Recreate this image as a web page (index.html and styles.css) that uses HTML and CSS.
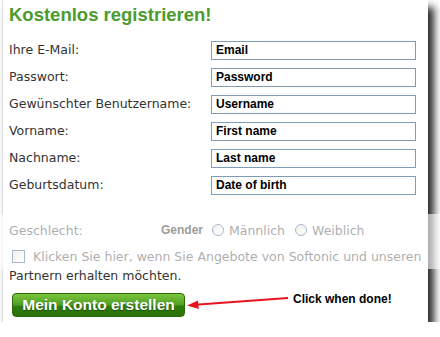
FILE: index.html
```html
<!DOCTYPE html>
<html lang="de">
<head>
    <meta charset="UTF-8">
    <title>Kostenlos registrieren</title>
    <link rel="stylesheet" href="styles.css">
</head>
<body>
    <div class="card">
        <h1>Kostenlos registrieren!</h1>

        <div class="fields">
            <label>Ihre E-Mail:</label>
            <div class="field">Email</div>
            <label>Passwort:</label>
            <div class="field">Password</div>
            <label>Gewünschter Benutzername:</label>
            <div class="field">Username</div>
            <label>Vorname:</label>
            <div class="field">First name</div>
            <label>Nachname:</label>
            <div class="field">Last name</div>
            <label>Geburtsdatum:</label>
            <div class="field">Date of birth</div>
        </div>

        <div class="gender">
            <span class="gender-label">Geschlecht:</span>
            <span class="gender-note">Gender</span>
            <span class="radio"></span><span class="option">Männlich</span>
            <span class="radio"></span><span class="option">Weiblich</span>
        </div>

        <p class="optin"><span class="check"></span>Klicken Sie hier, wenn Sie Angebote von Softonic und unseren Partnern erhalten möchten.</p>

        <div class="submit">
            <button class="btn">Mein Konto erstellen</button>
            <svg class="arrow" width="104" height="16" viewBox="0 0 104 16">
                <line x1="6" y1="11" x2="102" y2="4" stroke="#e8141e" stroke-width="2"/>
                <polygon points="1,11.5 12,6.5 12.8,15" fill="#e8141e"/>
            </svg>
            <span class="hint">Click when done!</span>
        </div>

        <!-- greyed-out band laid over the optional part of the form -->
        <div class="veil"></div>
    </div>
</body>
</html>
```

FILE: styles.css
```css
/* Basic Resets */
* {
    margin: 0;
    padding: 0;
    box-sizing: border-box;
}

body {
    font-family: 'DejaVu Sans', Verdana, sans-serif;
    font-size: 12.5px;
    color: #333;
    background: #fff;
}

.card {
    position: relative;
    width: 426px;
    height: 322px;
    margin-left: 2px;
    padding: 0 0 0 6px;
    background: #fff;
    border-left: 1px solid #e0e0e0;
    box-shadow: 6px 7px 8px rgba(0, 0, 0, 0.85);
}

.card h1 {
    font-family: 'Liberation Sans', Arial, sans-serif;
    font-size: 18.5px;
    font-weight: bold;
    line-height: 26px;
    padding-top: 2px;
    color: #4c9b2c;
}

.fields {
    display: grid;
    grid-template-columns: 202px 205px;
    grid-auto-rows: 19px;
    row-gap: 8px;
    align-items: center;
    margin-top: 13px;
}

.fields label {
    line-height: 19px;
    padding-bottom: 3px;
}

.field {
    height: 19px;
    border: 1px solid #7f9db9;
    padding-left: 4px;
    font-family: 'Liberation Sans', Arial, sans-serif;
    font-size: 12px;
    font-weight: bold;
    line-height: 17px;
    color: #000;
}

.gender {
    display: flex;
    align-items: center;
    height: 20px;
    margin-top: 25px;
}

.gender-label {
    width: 152px;
}

.gender-note {
    width: 51px;
    font-family: 'Liberation Sans', Arial, sans-serif;
    font-size: 12px;
    font-weight: bold;
    color: #000;
}

.radio {
    width: 12px;
    height: 12px;
    border: 1px solid #1c5180;
    border-radius: 50%;
    background: linear-gradient(135deg, #dcdcd6, #fff);
    margin-right: 5px;
}

.option {
    margin-right: 10px;
}

.optin {
    line-height: 19px;
    margin-top: 7px;
    padding-right: 2px;
}

.check {
    display: inline-block;
    width: 13px;
    height: 13px;
    border: 1px solid #1c5180;
    background: linear-gradient(135deg, #dcdcd6, #fff);
    margin: 0 8px 0 3px;
    vertical-align: -2px;
}

.submit {
    display: flex;
    align-items: center;
    margin-top: 8px;
    padding-left: 3px;
}

.btn {
    width: 173px;
    height: 24px;
    border: 1px solid #2a6a0c;
    border-radius: 4px;
    background: linear-gradient(#7cc63e, #4e9e22 50%, #2f7c0c 55%, #2a700a);
    color: #fff;
    font-family: 'Liberation Sans', Arial, sans-serif;
    font-size: 15.5px;
    font-weight: bold;
    text-shadow: 0 1px 1px #1d5006;
}

.arrow {
    margin: -7px 0 0 1px;
}

.hint {
    margin: -13px 0 0 3px;
    font-family: 'Liberation Sans', Arial, sans-serif;
    font-size: 12px;
    font-weight: bold;
    color: #000;
}

.veil {
    position: absolute;
    left: -3px;
    top: 214px;
    width: 440px;
    height: 55px;
    background: rgba(255, 255, 255, 0.6);
}
```
